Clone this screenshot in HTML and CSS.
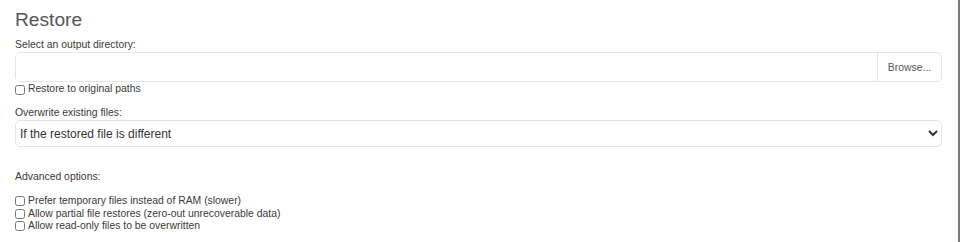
FILE: index.html
```html
<html>
    <head>
        <title>Restore</title>
        <link rel="stylesheet" href="styles.css">
    </head>
    <body>
        <div class="page">
            <h3 class="title">Restore</h3>

            <label class="field" for="restore-path">Select an output directory:</label>
            <div class="path-row">
                <input id="restore-path" class="path-input" type="text">
                <button class="browse" type="button">Browse...</button>
            </div>
            <label class="check first"><input type="checkbox"><span>Restore to original paths</span></label>

            <label class="field spaced" for="overwrite">Overwrite existing files:</label>
            <select id="overwrite" class="choice">
                <option>If the restored file is different</option>
                <option>Always</option>
                <option>Never</option>
            </select>

            <div class="field advanced">Advanced options:</div>
            <div class="options">
                <label class="check"><input type="checkbox"><span>Prefer temporary files instead of RAM (slower)</span></label>
                <label class="check"><input type="checkbox"><span>Allow partial file restores (zero-out unrecoverable data)</span></label>
                <label class="check"><input type="checkbox"><span>Allow read-only files to be overwritten</span></label>
            </div>
        </div>
    </body>
</html>
```

FILE: styles.css
```css
html, body {
    margin: 0;
    height: 100%;
}

body {
    font-family: "Liberation Sans", Arial, sans-serif;
    font-size: 10.4px;
    color: #3a3a3a;
    background-color: #ffffff;
}

.page {
    box-sizing: border-box;
    min-height: 100%;
    padding: 0 16px 0 15px;
    border-right: 2px solid #7a7a7a;
    overflow: hidden;
}

h3.title {
    font-size: 19.2px;
    font-weight: 500;
    line-height: 21px;
    color: #555555;
    margin: 9px 0 9px 0;
}

.field {
    display: block;
    line-height: 12px;
    margin-bottom: 1px;
}

.field.spaced {
    margin-top: 11px;
}

.field.advanced {
    margin-top: 24px;
    margin-bottom: 12px;
}

.path-row {
    display: flex;
    box-sizing: border-box;
    height: 30px;
    border: 1px solid #e4e4e4;
    border-radius: 5px;
    overflow: hidden;
}

.path-input {
    flex: 1;
    border: none;
    border-right: 1px solid #e4e4e4;
    outline: none;
    padding: 0 8px;
    font-family: inherit;
    font-size: 12px;
}

.browse {
    width: 63px;
    border: none;
    background-color: #ffffff;
    color: #555555;
    font-family: inherit;
    font-size: 10.4px;
    padding: 0;
}

.check {
    display: flex;
    align-items: center;
    height: 12.5px;
    line-height: 12.5px;
}

.check.first {
    height: 13px;
    margin-top: 1px;
}

.check input {
    width: 10px;
    height: 10px;
    margin: 0 3px 0 0;
}

select.choice {
    display: block;
    box-sizing: border-box;
    width: 100%;
    height: 27px;
    border: 1px solid #e4e4e4;
    border-radius: 5px;
    background-color: #ffffff;
    color: #333333;
    font-family: inherit;
    font-size: 12px;
    padding: 0;
}
```
